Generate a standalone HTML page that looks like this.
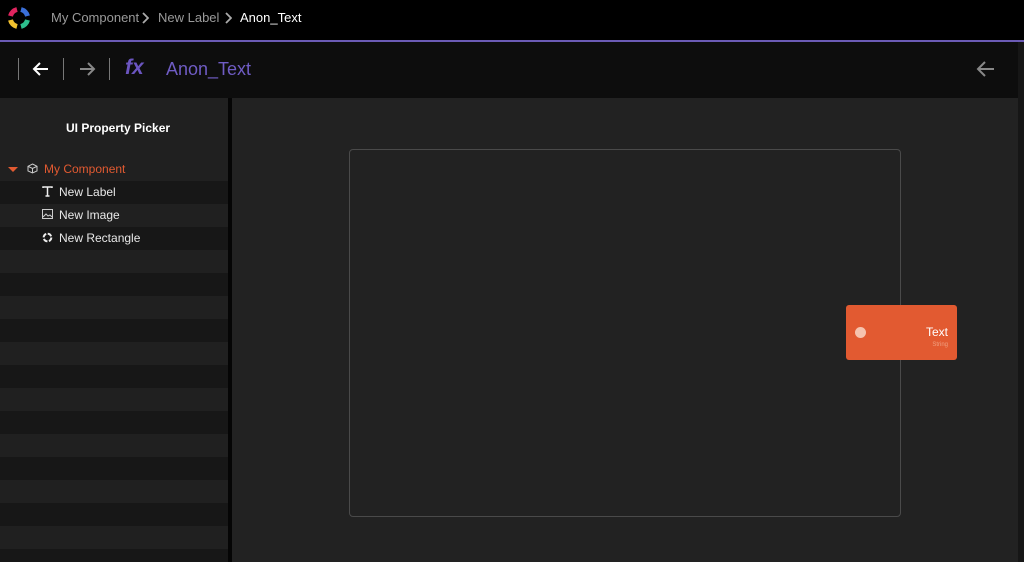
<!DOCTYPE html>
<html><head><style>
*{margin:0;padding:0;box-sizing:border-box}
html,body{width:1024px;height:562px;overflow:hidden}
body{background:#222;font-family:"Liberation Sans",sans-serif;position:relative}
.top{position:absolute;left:0;top:0;width:1024px;height:40px;background:#000}
.pl{position:absolute;left:0;top:40px;width:1024px;height:2px;background:#6b5bb5}
.tb{position:absolute;left:0;top:42px;width:1018px;height:56px;background:#0d0d0d}
.sb{position:absolute;left:1018px;top:42px;width:6px;height:520px;background:#161616}
.crumb{position:absolute;top:10px;font-size:13px;color:#9a9a9a}
.left{position:absolute;left:0;top:98px;width:228px;height:464px;background:#202020}
.div{position:absolute;left:228px;top:98px;width:4px;height:464px;background:#050505}
.row{position:absolute;left:0;width:228px;height:23px}
.dk{background:#171717}
.t{position:absolute;font-size:12px;color:#e8e8e8}
.canvas{position:absolute;left:349px;top:149px;width:552px;height:368px;border:1px solid #4a4a4a;border-radius:4px}
.node{position:absolute;left:846px;top:305px;width:111px;height:55px;background:#e25a31;border-radius:3px}
</style></head><body>
<div class="top"></div>
<svg style="position:absolute;left:7px;top:6px" width="24" height="24" viewBox="0 0 24 24">
<path d="M3.5 10 A9 9 0 0 1 10 3.5" stroke="#e0245e" stroke-width="5" fill="none"/>
<path d="M14 3.5 A9 9 0 0 1 20.5 10" stroke="#3a6fd8" stroke-width="5" fill="none"/>
<path d="M20.5 14 A9 9 0 0 1 14 20.5" stroke="#2dbf8e" stroke-width="5" fill="none"/>
<path d="M10 20.5 A9 9 0 0 1 3.5 14" stroke="#f2c12e" stroke-width="5" fill="none"/>
</svg>
<div class="crumb" style="left:51px">My Component</div>
<svg style="position:absolute;left:141px;top:12px" width="8" height="12" viewBox="0 0 8 12"><path d="M2 1l5 5-5 5" stroke="#aaa" stroke-width="1.8" fill="none"/></svg>
<div class="crumb" style="left:158px">New Label</div>
<svg style="position:absolute;left:224px;top:12px" width="8" height="12" viewBox="0 0 8 12"><path d="M2 1l5 5-5 5" stroke="#aaa" stroke-width="1.8" fill="none"/></svg>
<div class="crumb" style="left:240px;color:#fff">Anon_Text</div>
<div class="pl"></div>
<div class="tb"></div>
<div class="sb"></div>
<div style="position:absolute;left:18px;top:58px;width:1px;height:22px;background:#777"></div>
<div style="position:absolute;left:63px;top:58px;width:1px;height:22px;background:#777"></div>
<div style="position:absolute;left:109px;top:58px;width:1px;height:22px;background:#777"></div>
<svg style="position:absolute;left:32px;top:61px" width="18" height="16" viewBox="0 0 18 16"><path d="M16 8H2M8 2L2 8l6 6" stroke="#fff" stroke-width="2" fill="none"/></svg>
<svg style="position:absolute;left:78px;top:61px" width="18" height="16" viewBox="0 0 18 16"><path d="M2 8h14M10 2l6 6-6 6" stroke="#888" stroke-width="2" fill="none"/></svg>
<svg style="position:absolute;left:976px;top:60px" width="20" height="18" viewBox="0 0 20 18"><path d="M18 9H2M9 2L2 9l7 7" stroke="#888" stroke-width="2" fill="none"/></svg>
<div style="position:absolute;left:125px;top:56px;font-size:21px;font-style:italic;font-weight:bold;color:#6b55c0">fx</div>
<div style="position:absolute;left:166px;top:59px;font-size:18px;color:#6f5cc4">Anon_Text</div>
<div class="left"></div>
<div class="row dk" style="top:181px"></div>
<div class="row dk" style="top:227px"></div>
<div class="row dk" style="top:273px"></div>
<div class="row dk" style="top:319px"></div>
<div class="row dk" style="top:365px"></div>
<div class="row dk" style="top:411px"></div>
<div class="row dk" style="top:457px"></div>
<div class="row dk" style="top:503px"></div>
<div class="row dk" style="top:549px"></div>
<div class="div"></div>
<div class="t" style="left:66px;top:121px;font-weight:bold;color:#fff">UI Property Picker</div>
<div style="position:absolute;left:8px;top:167px;width:0;height:0;border-left:5px solid transparent;border-right:5px solid transparent;border-top:5px solid #e25a31"></div>
<svg style="position:absolute;left:27px;top:163px" width="11" height="11" viewBox="0 0 11 11"><path d="M5.5 1L10 3.3v4.6L5.5 10 1 7.9V3.3zM1 3.3l4.5 2.2L10 3.3M5.5 5.5V10" stroke="#ccc" fill="none"/></svg>
<div class="t" style="left:44px;top:162px;color:#e25a31">My Component</div>
<svg style="position:absolute;left:42px;top:186px" width="11" height="11" viewBox="0 0 11 11"><path d="M1 2V1h9v1M5.5 1v9M3.5 10h4" stroke="#eee" stroke-width="1.5" fill="none"/></svg>
<div class="t" style="left:59px;top:185px">New Label</div>
<svg style="position:absolute;left:42px;top:209px" width="11" height="10" viewBox="0 0 11 10"><rect x="0.5" y="0.5" width="10" height="9" stroke="#ccc" fill="none"/><path d="M1 8l3-3 2 2 2-1 2 2" stroke="#ccc" fill="none"/></svg>
<div class="t" style="left:59px;top:208px">New Image</div>
<svg style="position:absolute;left:42px;top:232px" width="11" height="11" viewBox="0 0 11 11"><circle cx="5.5" cy="5.5" r="3.8" stroke="#eee" stroke-width="2" fill="none" stroke-dasharray="4.5 1.5"/></svg>
<div class="t" style="left:59px;top:231px">New Rectangle</div>
<div class="canvas"></div>
<div class="node">
<div style="position:absolute;left:9px;top:22px;width:11px;height:11px;border-radius:50%;background:#f6c3ae"></div>
<div style="position:absolute;right:9px;top:20px;font-size:12px;color:#fff">Text</div>
<div style="position:absolute;right:9px;top:37px;font-size:6px;color:#f0a080">String</div>
</div>
</body></html>
